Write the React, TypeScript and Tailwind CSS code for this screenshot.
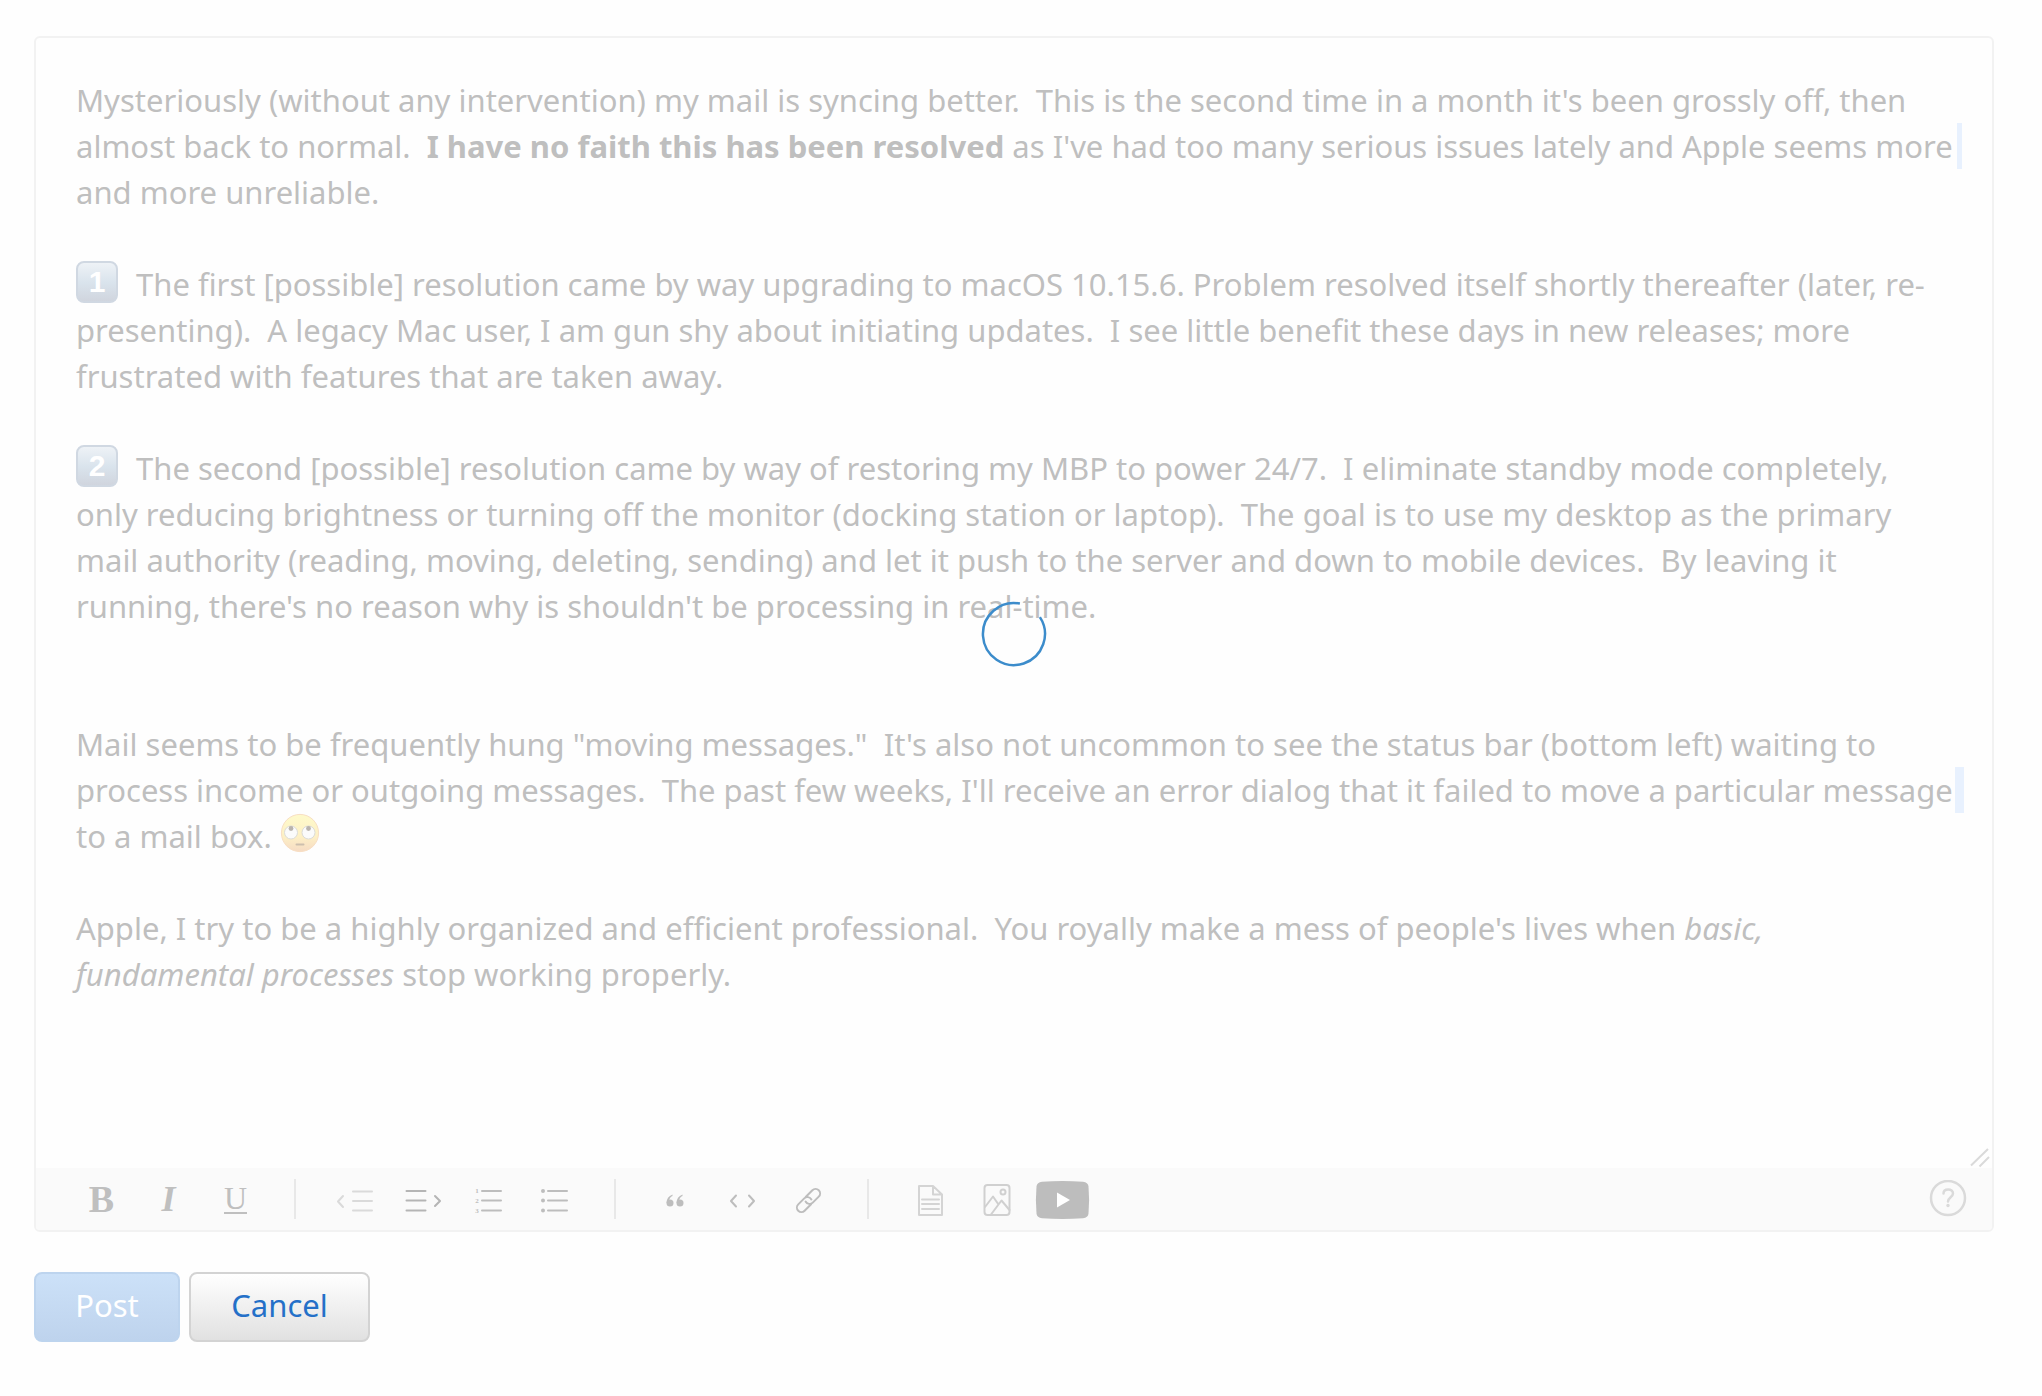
import type { ReactNode } from "react";

function ToolButton({ label, children }: { label: string; children: ReactNode }) {
  return (
    <button type="button" aria-label={label} className="flex h-[62px] w-[67px] items-center justify-center">
      {children}
    </button>
  );
}

function Icon({ children, className = "text-[#bdbdbd]" }: { children: ReactNode; className?: string }) {
  return (
    <svg
      viewBox="0 0 67 62"
      width="67"
      height="62"
      fill="none"
      stroke="currentColor"
      strokeWidth="2"
      strokeLinecap="round"
      strokeLinejoin="round"
      className={className}
      aria-hidden="true"
    >
      {children}
    </svg>
  );
}

function Divider() {
  return <span className="mx-[25px] h-10 w-0.5 bg-[#e8e8e8]" />;
}

function Keycap({ children }: { children: ReactNode }) {
  return (
    <span className="mr-[18px] inline-flex h-[42px] w-[42px] items-center justify-center rounded-lg border-2 border-[#d0d8e2] bg-linear-to-b from-[#eef2f6] via-[#dae4ed] to-[#d0d5de] align-top font-['Liberation_Sans'] text-[30px] leading-none font-bold text-white">
      {children}
    </span>
  );
}

function RollingEyes() {
  return (
    <svg viewBox="0 0 40 40" width="40" height="40" className="inline-block align-top" role="img" aria-label="Face with rolling eyes">
      <defs>
        <linearGradient id="face" x1="0" y1="0" x2="0" y2="1">
          <stop offset="0" stopColor="#fefacb" />
          <stop offset="0.6" stopColor="#fdf0c6" />
          <stop offset="1" stopColor="#f6dbc4" />
        </linearGradient>
      </defs>
      <circle cx="20" cy="20" r="18.6" fill="url(#face)" stroke="#f8dfc4" strokeWidth="1" />
      <circle cx="11" cy="19.500" r="6.500" fill="#fbfbfb" stroke="#dcdcd8" />
      <circle cx="28.500" cy="19.500" r="6.500" fill="#fbfbfb" stroke="#dcdcd8" />
      <circle cx="11" cy="15.500" r="2.400" fill="#b9b4ae" />
      <circle cx="28.500" cy="15.500" r="2.400" fill="#b9b4ae" />
      <path d="M16.500 31.500h7" stroke="#cdbfae" strokeWidth="2" strokeLinecap="round" />
    </svg>
  );
}

const nb = "\u00a0";

function Message() {
  return (
    <div
      role="textbox"
      aria-multiline="true"
      aria-label="Message"
      className="flex flex-col gap-[46px] px-10 pt-[39px] pb-[171px] text-[31px] leading-[46px] whitespace-nowrap text-[#bfbfbf]"
    >
      <p>
        Mysteriously (without any intervention) my mail is syncing better.{nb} This is the second time in a month it's been grossly off, then
        <br />
        almost back to normal.{nb} <strong className="font-bold">I have no faith this has been resolved</strong> as I've had too many serious issues lately and Apple seems more
        <span className="ml-1 inline-block h-[46px] w-[5px] bg-[#e8f1fe] align-top" />
        <br />
        and more unreliable.
      </p>
      <p>
        <Keycap>1</Keycap>The first [possible] resolution came by way upgrading to macOS 10.15.6. Problem resolved itself shortly thereafter (later, re-
        <br />
        presenting).{nb} A legacy Mac user, I am gun shy about initiating updates.{nb} I see little benefit these days in new releases; more
        <br />
        frustrated with features that are taken away.
      </p>
      <p className="mb-[46px]">
        <Keycap>2</Keycap>The second [possible] resolution came by way of restoring my MBP to power 24/7.{nb} I eliminate standby mode completely,
        <br />
        only reducing brightness or turning off the monitor (docking station or laptop).{nb} The goal is to use my desktop as the primary
        <br />
        mail authority (reading, moving, deleting, sending) and let it push to the server and down to mobile devices.{nb} By leaving it
        <br />
        running, there's no reason why is shouldn't be processing in real-time.
      </p>
      <p>
        Mail seems to be frequently hung "moving messages."{nb} It's also not uncommon to see the status bar (bottom left) waiting to
        <br />
        process income or outgoing messages.{nb} The past few weeks, I'll receive an error dialog that it failed to move a particular message
        <span className="ml-0.5 inline-block h-[46px] w-[9px] bg-[#e8f1fe] align-top" />
        <br />
        to a mail box. <RollingEyes />
      </p>
      <p>
        Apple, I try to be a highly organized and efficient professional.{nb} You royally make a mess of people's lives when <em>basic,</em>
        <br />
        <em>fundamental processes</em> stop working properly.
      </p>
    </div>
  );
}

function Toolbar() {
  return (
    <div role="toolbar" aria-label="Formatting" className="flex h-[62px] items-center bg-[#fafafa] pr-[25px] pl-8 font-['Liberation_Serif'] text-[#bfbfbf]">
      <ToolButton label="Bold">
        <span className="text-[38px] leading-none font-bold">B</span>
      </ToolButton>
      <ToolButton label="Italic">
        <span className="text-[36px] leading-none font-bold italic">I</span>
      </ToolButton>
      <ToolButton label="Underline">
        <span className="border-b-2 border-[#bfbfbf] text-[32px] leading-[28px]">U</span>
      </ToolButton>
      <Divider />
      <ToolButton label="Outdent">
        <Icon className="text-[#dadada]">
          <path d="M22 28l-5 5.500 5 5.500M32 23.500h19M32 33h19M32 42.500h19" />
        </Icon>
      </ToolButton>
      <ToolButton label="Indent">
        <Icon className="text-[#b5b5b5]">
          <path d="M47 28l5 5-5 5M18.500 23h19M18.500 32.500h19M18.500 42.500h19" />
        </Icon>
      </ToolButton>
      <ToolButton label="Numbered list">
        <Icon>
          <path d="M27 23h19M27 32.500h19M27 42.500h19" />
          <g fill="currentColor" stroke="none" fontSize="7" fontWeight="700" textAnchor="middle">
            <text x="22" y="25">1</text>
            <text x="22" y="35">2</text>
            <text x="22" y="45">3</text>
          </g>
        </Icon>
      </ToolButton>
      <ToolButton label="Bulleted list">
        <Icon>
          <path d="M26 23h19M26 32.500h19M26 42.500h19" />
          <g fill="currentColor" stroke="none">
            <circle cx="21" cy="23" r="2" />
            <circle cx="21" cy="32.500" r="2" />
            <circle cx="21" cy="42.500" r="2" />
          </g>
        </Icon>
      </ToolButton>
      <Divider />
      <ToolButton label="Quote">
        <Icon>
          <g fill="currentColor" stroke="none">
            <circle cx="29" cy="35" r="3.500" />
            <circle cx="39" cy="35" r="3.500" />
            <path d="M25.500 35c0-4 2-7 6-8.500v1.500c-2.200 1-3.200 2.500-3.400 5zM35.500 35c0-4 2-7 6-8.500v1.500c-2.200 1-3.200 2.500-3.400 5z" />
          </g>
        </Icon>
      </ToolButton>
      <ToolButton label="Code">
        <Icon>
          <path d="M28 27.500l-5 5.500 5 5.500M41 27.500l5 5.500-5 5.500" />
        </Icon>
      </ToolButton>
      <ToolButton label="Link">
        <Icon>
          <g transform="rotate(-45 33.500 32.500)">
            <path d="M33 37h-9.500a4.500 4.500 0 0 1 0-9h8.500a4.500 4.500 0 0 1 4.300 5.800M34 28h9.500a4.500 4.500 0 0 1 0 9h-8.500a4.500 4.500 0 0 1-4.300-5.800" />
          </g>
        </Icon>
      </ToolButton>
      <Divider />
      <ToolButton label="Insert document">
        <Icon className="text-[#d4d4d4]">
          <path d="M25 18h14l9 8.500v20.500h-23zM39 18v8.500h9M28 31.500h17M28 36h17M28 41h17" />
        </Icon>
      </ToolButton>
      <ToolButton label="Insert image">
        <Icon className="text-[#d0d0d0]">
          <rect x="23.500" y="17" width="25" height="30" rx="3" />
          <circle cx="42" cy="24" r="2.500" />
          <path d="M24 39l8-10.500 5.500 8M30 46.500l10.500-14 8 9.500" />
        </Icon>
      </ToolButton>
      <ToolButton label="Insert video">
        <Icon>
          <path
            d="M14 13.800q20.500-1.600 41 0 5 .4 5.500 4.700 1.200 13.500 0 27-.5 4.300-5.500 4.700-20.500 1.600-41 0-5-.4-5.500-4.700-1.200-13.500 0-27 .5-4.300 5.500-4.700z"
            fill="currentColor"
            stroke="none"
          />
          <path d="M29 24.500v15l13-7.500z" fill="#fff" stroke="none" />
        </Icon>
      </ToolButton>
      <button type="button" aria-label="Help" className="ml-auto">
        <svg viewBox="0 0 38 38" width="38" height="38" fill="none" stroke="#dadada" strokeWidth="2.500" aria-hidden="true">
          <circle cx="19" cy="18" r="17" />
          <path d="M14.500 13.500c0-2.500 2-4 4.700-4s4.800 1.500 4.800 4c0 3.500-5 4-5 8" strokeLinecap="round" />
          <circle cx="19" cy="25.500" r="1.700" fill="#dadada" stroke="none" />
        </svg>
      </button>
    </div>
  );
}

export default function App() {
  return (
    <main className="min-h-screen bg-[#fefefe] pt-9 pr-12 pl-[34px] font-['Noto_Sans',sans-serif]">
      <section className="relative overflow-hidden rounded-md border-2 border-[#f2f2f2]">
        <div className="relative">
          <Message />
          <svg className="absolute right-0.5 bottom-0" viewBox="0 0 20 20" width="20" height="20" stroke="#dadada" strokeWidth="2" aria-hidden="true">
            <path d="M1 17.500L18 1M9.500 18.500L19 9" />
          </svg>
        </div>
        <Toolbar />
        <div role="status" aria-label="Loading" className="pointer-events-none absolute inset-0 flex items-center justify-center">
          <svg viewBox="0 0 66 66" width="66" height="66" fill="none" stroke="#3c8ccb" strokeWidth="2.500" aria-hidden="true">
            <path d="M38.900 2.600A31 31 0 1 0 58.900 16.100" />
          </svg>
        </div>
      </section>
      <div className="mt-10 flex gap-[9px] text-[31px]">
        <button type="button" disabled className="h-[70px] w-[146px] rounded-lg border-2 border-[#bdd4ee] bg-linear-to-b from-[#cce1f8] to-[#bed3ed] pb-1 text-white">
          Post
        </button>
        <button type="button" className="h-[70px] w-[181px] rounded-lg border-2 border-[#d3d3d3] bg-linear-to-b from-white to-[#e1e1e1] pb-1 text-[#2470c8]">
          Cancel
        </button>
      </div>
    </main>
  );
}
